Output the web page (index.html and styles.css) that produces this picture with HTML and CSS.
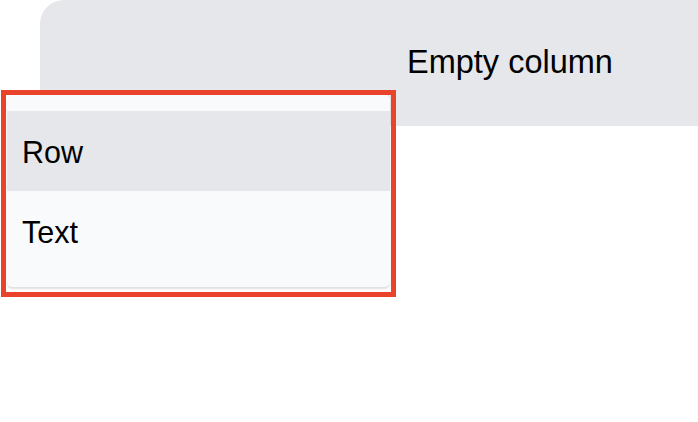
FILE: index.html
```html
<!DOCTYPE html>
<html>
<head>
<meta charset="utf-8">
<link rel="stylesheet" href="styles.css">
</head>
<body>
<div class="board">
  <div class="column-header">
    <span class="column-title">Empty column</span>
  </div>
  <div class="menu-highlight">
    <div class="menu">
      <div class="menu-item active">Row</div>
      <div class="menu-item">Text</div>
    </div>
  </div>
</div>
</body>
</html>
```
FILE: styles.css
```css
html, body {
  margin: 0;
  padding: 0;
  background: #ffffff;
  font-family: "Liberation Sans", Arial, sans-serif;
  color: #000000;
}
.board {
  position: relative;
  width: 698px;
  height: 422px;
  overflow: hidden;
}
.column-header {
  margin-left: 40px;
  height: 126px;
  background: #e5e7eb;
  border-top-left-radius: 24px;
  box-sizing: border-box;
  padding-left: 367px;
  padding-top: 44px;
}
.column-title {
  font-size: 32.5px;
  line-height: 37px;
  display: block;
}
.menu-highlight {
  position: absolute;
  left: 6px;
  top: 95px;
  width: 385px;
  height: 197px;
  outline: 5px solid #e9432b;
  box-sizing: border-box;
  padding: 0 1px;
}
.menu {
  background: #f9fafb;
  border-radius: 5px;
  box-shadow: 0 2px 2px rgba(0,0,0,0.12);
  padding: 16px 0 15px;
  height: 192px;
  box-sizing: border-box;
}
.menu-item {
  height: 80px;
  display: flex;
  align-items: center;
  padding-left: 15px;
  padding-top: 3px;
  box-sizing: border-box;
  font-size: 30.5px;
}
.menu-item.active {
  background: #e5e7eb;
}
```
